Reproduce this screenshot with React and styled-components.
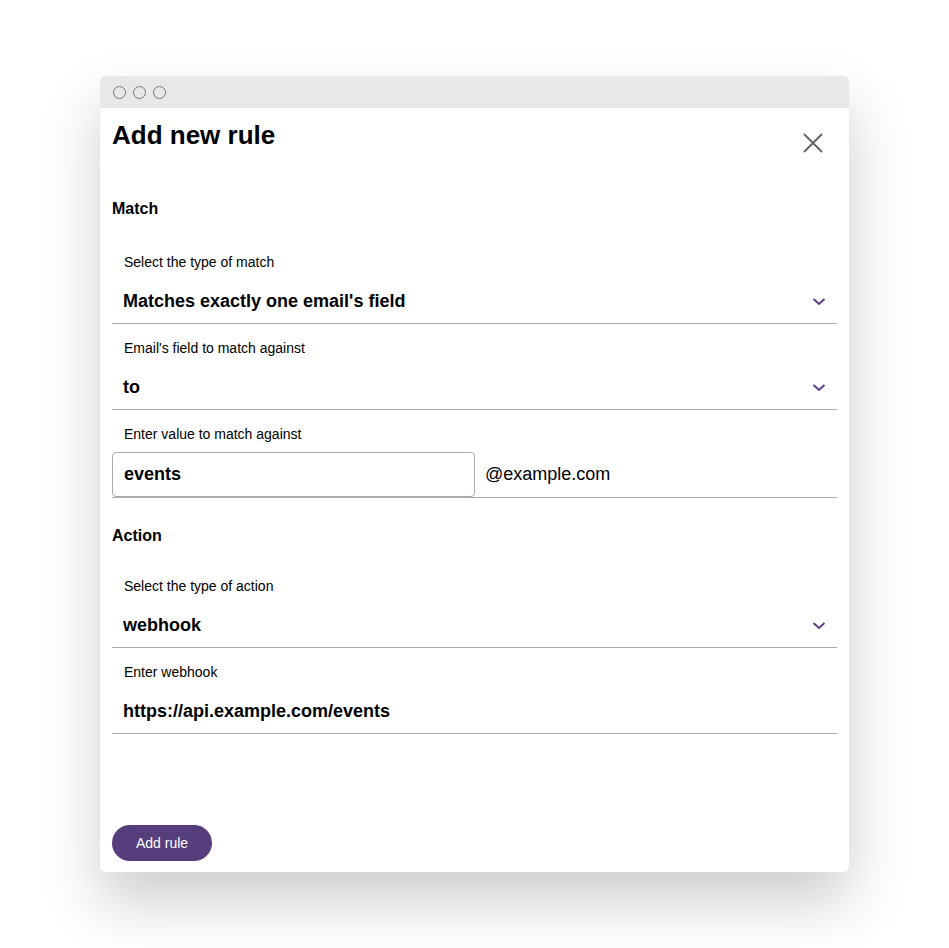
import React from "react";
import styled, { createGlobalStyle } from "styled-components";

const Global = createGlobalStyle`
  html, body { margin: 0; padding: 0; background: #fff; }
  body { font-family: "Liberation Sans", Arial, sans-serif; color: #000; }
  * { box-sizing: border-box; }
`;

const Page = styled.div`
  min-height: 100vh;
  display: flex;
  align-items: center;
  justify-content: center;
`;

const Window = styled.div`
  width: 749px;
  height: 796px;
  background: #fff;
  border-radius: 6px;
  overflow: hidden;
  display: flex;
  flex-direction: column;
  box-shadow: 0 30px 60px rgba(0, 0, 0, 0.2);
`;

const TitleBar = styled.div`
  height: 32px;
  flex-shrink: 0;
  background: #e8e8e8;
  display: flex;
  align-items: center;
  gap: 7px;
  padding-left: 13px;
`;

const Dot = styled.span`
  width: 13px;
  height: 13px;
  border: 1px solid #767676;
  border-radius: 50%;
`;

const Body = styled.form`
  flex: 1;
  display: flex;
  flex-direction: column;
  padding: 12px 12px 11px;
`;

const Header = styled.div`
  display: flex;
  justify-content: space-between;
  align-items: flex-start;
`;

const Title = styled.h1`
  margin: 0;
  font-size: 26px;
  line-height: 30px;
  font-weight: 700;
`;

const CloseButton = styled.button`
  width: 48px;
  height: 48px;
  margin-top: -1px;
  padding: 0;
  border: none;
  background: none;
  display: flex;
  align-items: center;
  justify-content: center;
  cursor: pointer;
`;

const SectionTitle = styled.h2`
  margin: ${(p) => p.$top}px 0 0;
  font-size: 16px;
  line-height: 18px;
  font-weight: 700;
`;

const Fields = styled.div`
  margin-top: ${(p) => p.$top}px;
  display: flex;
  flex-direction: column;
  gap: 16px;
`;

const Field = styled.div`
  display: flex;
  flex-direction: column;
`;

const Label = styled.label`
  font-size: 14px;
  line-height: 16px;
  padding-left: 12px;
  margin-bottom: 10px;
`;

const SelectRow = styled.div`
  height: 44px;
  border-bottom: 1px solid #aaa;
  display: flex;
  align-items: center;
  justify-content: space-between;
  padding: 0 11px 0 11px;
  font-size: 18px;
  font-weight: 700;
  cursor: pointer;
`;

const TextValue = styled.input`
  height: 44px;
  border: none;
  border-bottom: 1px solid #aaa;
  padding: 0 12px 0 11px;
  font-family: "Liberation Sans", Arial, sans-serif;
  font-size: 18px;
  font-weight: 700;
  color: #000;
  outline: none;
  background: transparent;
`;

const InputRow = styled.div`
  display: flex;
  align-items: center;
  border-bottom: 1px solid #aaa;
`;

const BoxInput = styled.input`
  width: 363px;
  height: 45px;
  border: 1px solid #aaa;
  border-radius: 4px;
  padding: 0 11px;
  font-family: "Liberation Sans", Arial, sans-serif;
  font-size: 18px;
  font-weight: 700;
  color: #000;
  outline: none;
`;

const Suffix = styled.span`
  margin-left: 10px;
  font-size: 18px;
`;

const SubmitButton = styled.button`
  margin-top: auto;
  align-self: flex-start;
  height: 36px;
  padding: 0 24px;
  border: none;
  border-radius: 18px;
  background: #563d7c;
  color: #fff;
  font-family: "Liberation Sans", Arial, sans-serif;
  font-size: 14px;
  cursor: pointer;
`;

const Chevron = () => (
  <svg width="14" height="9" viewBox="0 0 14 9" fill="none">
    <path d="M1.5 2 L7 7 L12.5 2" stroke="#5c3d8a" strokeWidth="2" />
  </svg>
);

const CloseIcon = () => (
  <svg width="20" height="20" viewBox="0 0 20 20" fill="none">
    <path d="M1 1 L19 19 M19 1 L1 19" stroke="#666" strokeWidth="2" />
  </svg>
);

const Select = ({ value }) => (
  <SelectRow>
    <span>{value}</span>
    <Chevron />
  </SelectRow>
);

export default function App() {
  return (
    <>
      <Global />
      <Page>
        <Window>
          <TitleBar>
            <Dot />
            <Dot />
            <Dot />
          </TitleBar>
          <Body onSubmit={(e) => e.preventDefault()}>
            <Header>
              <Title>Add new rule</Title>
              <CloseButton type="button" aria-label="Close">
                <CloseIcon />
              </CloseButton>
            </Header>

            <SectionTitle $top={33}>Match</SectionTitle>
            <Fields $top={36}>
              <Field>
                <Label>Select the type of match</Label>
                <Select value="Matches exactly one email's field" />
              </Field>
              <Field>
                <Label>Email's field to match against</Label>
                <Select value="to" />
              </Field>
              <Field>
                <Label>Enter value to match against</Label>
                <InputRow>
                  <BoxInput defaultValue="events" />
                  <Suffix>@example.com</Suffix>
                </InputRow>
              </Field>
            </Fields>

            <SectionTitle $top={29}>Action</SectionTitle>
            <Fields $top={33}>
              <Field>
                <Label>Select the type of action</Label>
                <Select value="webhook" />
              </Field>
              <Field>
                <Label>Enter webhook</Label>
                <TextValue defaultValue="https://api.example.com/events" />
              </Field>
            </Fields>

            <SubmitButton type="submit">Add rule</SubmitButton>
          </Body>
        </Window>
      </Page>
    </>
  );
}
